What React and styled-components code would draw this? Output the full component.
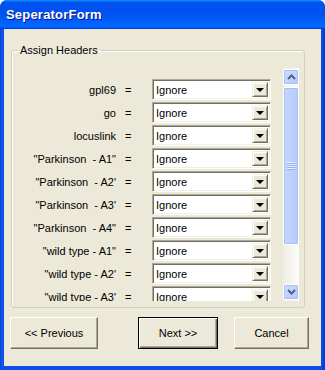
import React from 'react';
import styled, { createGlobalStyle } from 'styled-components';

const GlobalStyle = createGlobalStyle`
  html, body { margin: 0; padding: 0; background: #ffffff; }
  body { font-family: "Liberation Sans", Arial, sans-serif; font-size: 11px; color: #000; }
  * { box-sizing: border-box; }
`;

const Window = styled.div`
  width: 325px;
  height: 370px;
  display: flex;
  flex-direction: column;
  background: linear-gradient(90deg, #0831d9 0, #0a4fe6 1px, #1660f0 2px, #0a50e8 3px, #0a50e8 calc(100% - 4px), #0747d8 calc(100% - 2px), #0831d9 100%);
  border-radius: 7px 7px 0 0;
  overflow: hidden;
`;

const TitleBar = styled.div`
  height: 29px;
  flex: none;
  display: flex;
  align-items: center;
  padding: 0 0 1px 6px;
  background: linear-gradient(180deg, #0997ff, #0053ee 8%, #0050ee 40%, #0066ff 88%, #0066ff 93%, #005bff 95%, #003dd7 96%, #003dd7);
  color: #fff;
  font-family: "Liberation Sans", Arial, sans-serif;
  font-weight: bold;
  font-size: 13px;
  letter-spacing: 0.2px;
  text-shadow: 1px 1px #0f1089;
`;

const Client = styled.div`
  flex: 1;
  margin: 0 4px 4px;
  background: #ece9d8;
  display: flex;
  flex-direction: column;
`;

const Group = styled.fieldset`
  margin: 15px 16px 0 7px;
  padding: 11px 5px 6px 0;
  border: 1px solid #d0d0bf;
  border-radius: 3px;
  min-width: 0;
  box-shadow: inset 1px 1px #fff;
`;

const Legend = styled.legend`
  margin-left: 6px;
  padding: 0 2px;
  height: 13px;
  line-height: 13px;
  font-size: 11px;
  color: #000;
`;

const Pane = styled.div`
  display: flex;
  height: 233px;
`;

const List = styled.div`
  flex: 1;
  overflow: hidden;
  display: flex;
  flex-direction: column;
  gap: 2px;
  padding-top: 11px;
`;

const Row = styled.div`
  display: grid;
  grid-template-columns: 104px 36px 119px;
  height: 21px;
  flex: none;
  align-items: center;
`;

const Label = styled.span`
  text-align: right;
  white-space: pre;
`;

const Equals = styled.span`
  padding-left: 9px;
`;

const Combo = styled.div`
  height: 21px;
  display: flex;
  align-items: stretch;
  background: #fff;
  border: 1px solid;
  border-color: #aca899 #ffffff #ffffff #aca899;
  box-shadow: inset 1px 1px #716f64, inset -1px -1px #f1efe2;
  padding: 2px;
`;

const ComboValue = styled.span`
  flex: 1;
  padding-left: 1px;
  display: flex;
  align-items: center;
`;

const DropButton = styled.span`
  width: 16px;
  flex: none;
  background: #ece9d8;
  border: 1px solid;
  border-color: #f1efe2 #716f64 #716f64 #f1efe2;
  box-shadow: inset 1px 1px #fff, inset -1px -1px #aca899;
  display: flex;
  align-items: center;
  justify-content: center;
  &::after {
    content: "";
    width: 0;
    height: 0;
    border-left: 4px solid transparent;
    border-right: 4px solid transparent;
    border-top: 4px solid #000;
    margin-top: 1px;
  }
`;

const ScrollBar = styled.div`
  width: 16px;
  flex: none;
  display: flex;
  flex-direction: column;
  padding: 1px 0;
  background: linear-gradient(90deg, #eeede5, #fdfdfa);
`;

const ArrowButton = styled.div`
  height: 16px;
  flex: none;
  border: 1px solid #fff;
  border-radius: 2px;
  background: linear-gradient(135deg, #d0ddfd, #b4c9fa);
  box-shadow: inset 0 0 0 1px #a9bff5;
  display: flex;
  align-items: center;
  justify-content: center;
`;

const Track = styled.div`
  flex: 1;
  display: flex;
  flex-direction: column;
  padding-top: 2px;
`;

const Thumb = styled.div`
  height: 158px;
  border: 1px solid #fff;
  border-radius: 2px;
  background: linear-gradient(90deg, #c6d6fd, #b6cbfa);
  box-shadow: inset 0 0 0 1px #a9bff5;
  display: flex;
  align-items: center;
  justify-content: center;
`;

const Grip = styled.div`
  width: 8px;
  height: 8px;
  background: repeating-linear-gradient(180deg, #eef4fe 0, #eef4fe 1px, #8cb0f8 1px, #8cb0f8 2px);
`;

const Footer = styled.div`
  display: grid;
  grid-template-columns: 88px 40px 80px 16px 75px;
  grid-template-areas: "prev . next . cancel";
  margin: 9px 0 0 6px;
  height: 32px;
`;

const Button = styled.button`
  grid-area: ${p => p.$area};
  height: 32px;
  padding: 0;
  margin: 0;
  display: flex;
  align-items: center;
  justify-content: center;
  font-family: "Liberation Sans", Arial, sans-serif;
  font-size: 11px;
  line-height: 14px;
  color: #000;
  background: #ece9d8;
  border: 1px solid;
  border-color: ${p => (p.$default ? '#000' : '#fff #716f64 #716f64 #fff')};
  box-shadow: ${p =>
    p.$default
      ? 'inset 1px 1px #fff, inset -1px -1px #716f64, inset -2px -2px #aca899'
      : 'inset -1px -1px #aca899'};
  outline: none;
`;

const Chevron = ({ down }) => (
  <svg width="9" height="6" viewBox="0 0 9 6">
    <polyline
      points={down ? '1,1 4.5,4.5 8,1' : '1,5 4.5,1.5 8,5'}
      fill="none"
      stroke="#4d6185"
      strokeWidth="2"
    />
  </svg>
);

const rows = [
  'gpl69',
  'go',
  'locuslink',
  '"Parkinson  - A1"',
  '"Parkinson  - A2\'',
  '"Parkinson  - A3\'',
  '"Parkinson  - A4"',
  '"wild type - A1"',
  '"wild type - A2\'',
  '"wild type - A3\'',
];

export default function App() {
  return (
    <>
      <GlobalStyle />
      <Window>
        <TitleBar>SeperatorForm</TitleBar>
        <Client>
          <Group>
            <Legend>Assign Headers</Legend>
            <Pane>
              <List>
                {rows.map(r => (
                  <Row key={r}>
                    <Label>{r}</Label>
                    <Equals>=</Equals>
                    <Combo>
                      <ComboValue>Ignore</ComboValue>
                      <DropButton />
                    </Combo>
                  </Row>
                ))}
              </List>
              <ScrollBar>
                <ArrowButton>
                  <Chevron />
                </ArrowButton>
                <Track>
                  <Thumb>
                    <Grip />
                  </Thumb>
                </Track>
                <ArrowButton>
                  <Chevron down />
                </ArrowButton>
              </ScrollBar>
            </Pane>
          </Group>
          <Footer>
            <Button $area="prev">&lt;&lt; Previous</Button>
            <Button $area="next" $default>Next &gt;&gt;</Button>
            <Button $area="cancel">Cancel</Button>
          </Footer>
        </Client>
      </Window>
    </>
  );
}
